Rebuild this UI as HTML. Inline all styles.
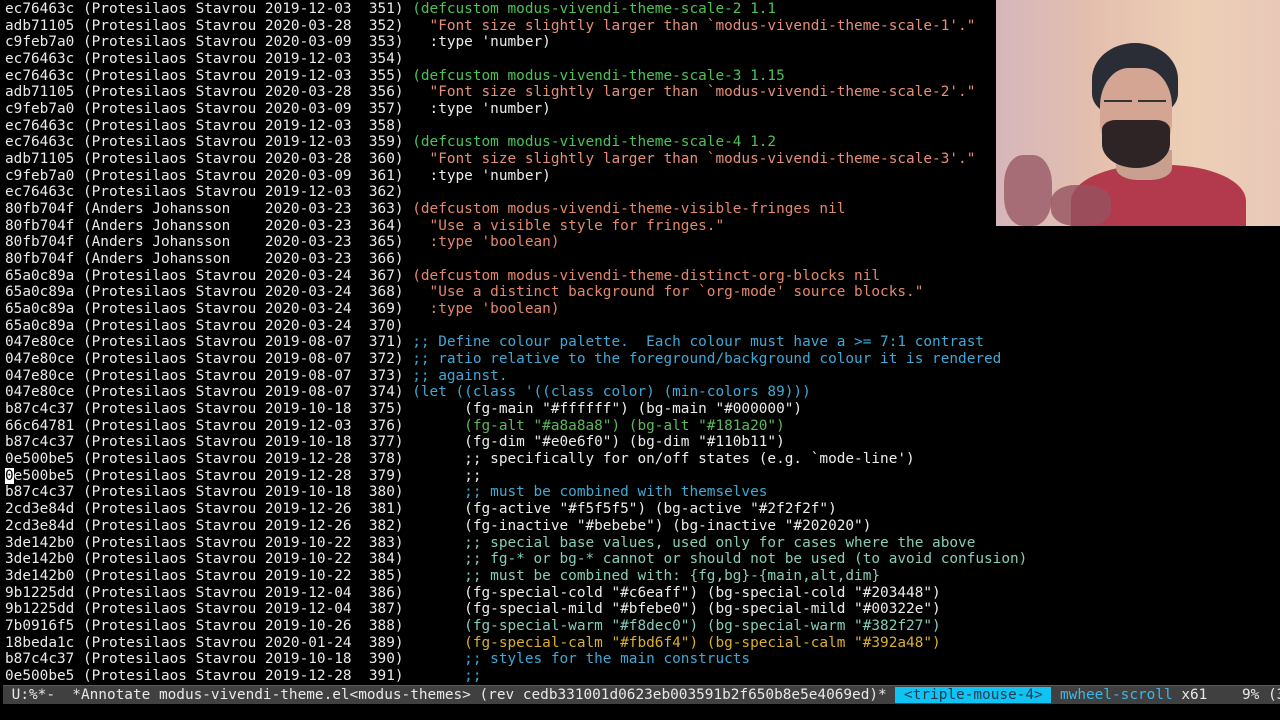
<!DOCTYPE html>
<html><head><meta charset="utf-8"><style>
html,body{margin:0;padding:0;background:#000;width:1280px;height:720px;overflow:hidden}
#t{position:absolute;left:5px;top:1px;margin:0;font-family:"DejaVu Sans Mono","Liberation Mono",monospace;font-size:14.4px;line-height:16.675px;color:#eaeaea;white-space:pre}
.g{color:#4cc257}.s{color:#e78f78}.w{color:#ececec}.c{color:#3fa9d6}.a{color:#5fb85a}.t{color:#86cdbb}.y{color:#dcb12a}.o{color:#e4886c}
.cur{background:#fff;color:#000}
#ml{position:absolute;left:3px;top:685px;width:1277px;height:18px;background:#404040;border-top:1px solid #5a5a5a;font-family:"DejaVu Sans Mono","Liberation Mono",monospace;font-size:14.4px;line-height:18px;color:#e8e8e8;white-space:pre;overflow:hidden}
.hl{background:#0fc4f2;color:#1c3a55}.mc{color:#3fb6e6}
#cam{position:absolute;left:996px;top:0;width:284px;height:226px;overflow:hidden;background:linear-gradient(90deg,#d6b6bb 0%,#e4bfae 35%,#edcfb6 70%,#e9c8b8 100%)}
#cam div{position:absolute}
</style></head><body>
<pre id="t">ec76463c (Protesilaos Stavrou 2019-12-03  351) <span class="g">(defcustom modus-vivendi-theme-scale-2 1.1</span>
adb71105 (Protesilaos Stavrou 2020-03-28  352) <span class="s">  "Font size slightly larger than `modus-vivendi-theme-scale-1'."</span>
c9feb7a0 (Protesilaos Stavrou 2020-03-09  353) <span class="w">  :type 'number)</span>
ec76463c (Protesilaos Stavrou 2019-12-03  354)
ec76463c (Protesilaos Stavrou 2019-12-03  355) <span class="g">(defcustom modus-vivendi-theme-scale-3 1.15</span>
adb71105 (Protesilaos Stavrou 2020-03-28  356) <span class="s">  "Font size slightly larger than `modus-vivendi-theme-scale-2'."</span>
c9feb7a0 (Protesilaos Stavrou 2020-03-09  357) <span class="w">  :type 'number)</span>
ec76463c (Protesilaos Stavrou 2019-12-03  358)
ec76463c (Protesilaos Stavrou 2019-12-03  359) <span class="g">(defcustom modus-vivendi-theme-scale-4 1.2</span>
adb71105 (Protesilaos Stavrou 2020-03-28  360) <span class="s">  "Font size slightly larger than `modus-vivendi-theme-scale-3'."</span>
c9feb7a0 (Protesilaos Stavrou 2020-03-09  361) <span class="w">  :type 'number)</span>
ec76463c (Protesilaos Stavrou 2019-12-03  362)
80fb704f (Anders Johansson    2020-03-23  363) <span class="o">(defcustom modus-vivendi-theme-visible-fringes nil</span>
80fb704f (Anders Johansson    2020-03-23  364) <span class="o">  "Use a visible style for fringes."</span>
80fb704f (Anders Johansson    2020-03-23  365) <span class="o">  :type 'boolean)</span>
80fb704f (Anders Johansson    2020-03-23  366)
65a0c89a (Protesilaos Stavrou 2020-03-24  367) <span class="o">(defcustom modus-vivendi-theme-distinct-org-blocks nil</span>
65a0c89a (Protesilaos Stavrou 2020-03-24  368) <span class="o">  "Use a distinct background for `org-mode' source blocks."</span>
65a0c89a (Protesilaos Stavrou 2020-03-24  369) <span class="o">  :type 'boolean)</span>
65a0c89a (Protesilaos Stavrou 2020-03-24  370)
047e80ce (Protesilaos Stavrou 2019-08-07  371) <span class="c">;; Define colour palette.  Each colour must have a &gt;= 7:1 contrast</span>
047e80ce (Protesilaos Stavrou 2019-08-07  372) <span class="c">;; ratio relative to the foreground/background colour it is rendered</span>
047e80ce (Protesilaos Stavrou 2019-08-07  373) <span class="c">;; against.</span>
047e80ce (Protesilaos Stavrou 2019-08-07  374) <span class="c">(let ((class '((class color) (min-colors 89)))</span>
b87c4c37 (Protesilaos Stavrou 2019-10-18  375) <span class="w">      (fg-main "#ffffff") (bg-main "#000000")</span>
66c64781 (Protesilaos Stavrou 2019-12-03  376) <span class="a">      (fg-alt "#a8a8a8") (bg-alt "#181a20")</span>
b87c4c37 (Protesilaos Stavrou 2019-10-18  377) <span class="w">      (fg-dim "#e0e6f0") (bg-dim "#110b11")</span>
0e500be5 (Protesilaos Stavrou 2019-12-28  378) <span class="w">      ;; specifically for on/off states (e.g. `mode-line')</span>
<span class="cur">0</span>e500be5 (Protesilaos Stavrou 2019-12-28  379) <span class="w">      ;;</span>
b87c4c37 (Protesilaos Stavrou 2019-10-18  380) <span class="c">      ;; must be combined with themselves</span>
2cd3e84d (Protesilaos Stavrou 2019-12-26  381) <span class="w">      (fg-active "#f5f5f5") (bg-active "#2f2f2f")</span>
2cd3e84d (Protesilaos Stavrou 2019-12-26  382) <span class="w">      (fg-inactive "#bebebe") (bg-inactive "#202020")</span>
3de142b0 (Protesilaos Stavrou 2019-10-22  383) <span class="t">      ;; special base values, used only for cases where the above</span>
3de142b0 (Protesilaos Stavrou 2019-10-22  384) <span class="t">      ;; fg-* or bg-* cannot or should not be used (to avoid confusion)</span>
3de142b0 (Protesilaos Stavrou 2019-10-22  385) <span class="t">      ;; must be combined with: {fg,bg}-{main,alt,dim}</span>
9b1225dd (Protesilaos Stavrou 2019-12-04  386) <span class="w">      (fg-special-cold "#c6eaff") (bg-special-cold "#203448")</span>
9b1225dd (Protesilaos Stavrou 2019-12-04  387) <span class="w">      (fg-special-mild "#bfebe0") (bg-special-mild "#00322e")</span>
7b0916f5 (Protesilaos Stavrou 2019-10-26  388) <span class="t">      (fg-special-warm "#f8dec0") (bg-special-warm "#382f27")</span>
18beda1c (Protesilaos Stavrou 2020-01-24  389) <span class="y">      (fg-special-calm "#fbd6f4") (bg-special-calm "#392a48")</span>
b87c4c37 (Protesilaos Stavrou 2019-10-18  390) <span class="c">      ;; styles for the main constructs</span>
0e500be5 (Protesilaos Stavrou 2019-12-28  391) <span class="c">      ;;</span></pre>
<div id="ml"> U:%*-  *Annotate modus-vivendi-theme.el&lt;modus-themes&gt; (rev cedb331001d0623eb003591b2f650b8e5e4069ed)* <span class="hl"> &lt;triple-mouse-4&gt; </span> <span class="mc">mwheel-scroll</span> x61    9% (37</div>
<div id="cam">
 <div style="left:75px;top:165px;width:175px;height:80px;border-radius:45% 45% 0 0;background:#b23a4c"></div>
 <div style="left:120px;top:150px;width:56px;height:30px;background:#c9a08f;border-radius:0 0 40% 40%"></div>
 <div style="left:96px;top:43px;width:86px;height:72px;border-radius:50% 50% 30% 30%;background:#2a2c36"></div>
 <div style="left:104px;top:68px;width:72px;height:96px;border-radius:40% 40% 45% 45%;background:#d3a592"></div>
 <div style="left:106px;top:120px;width:68px;height:48px;border-radius:20% 20% 50% 50%;background:#2e2426"></div>
 <div style="left:104px;top:98px;width:68px;height:20px;background:linear-gradient(#333,#333) 4px 2px/28px 2px no-repeat,linear-gradient(#333,#333) 38px 2px/28px 2px no-repeat"></div>
 <div style="left:8px;top:155px;width:48px;height:71px;border-radius:40%;background:#9a5a66;opacity:.8"></div>
 <div style="left:55px;top:185px;width:60px;height:41px;border-radius:40%;background:#96525f;opacity:.8"></div>
</div>
</body></html>
